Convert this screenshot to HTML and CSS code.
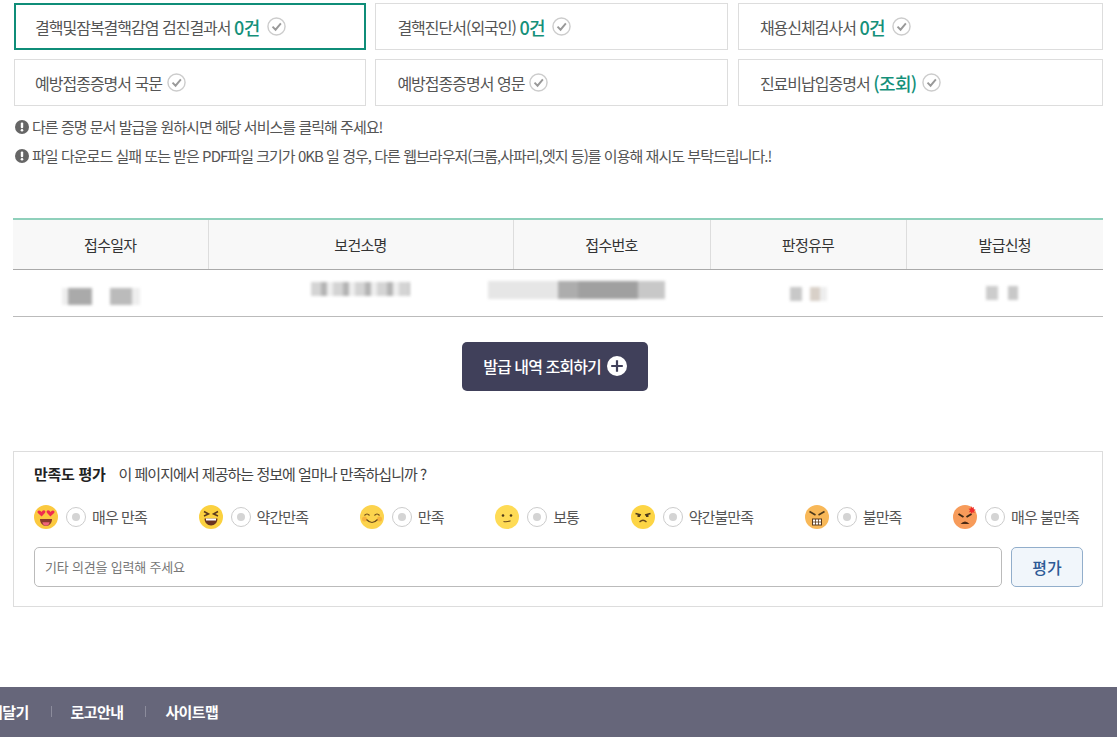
FILE: index.html
```html
<!DOCTYPE html>
<html lang="ko">
<head>
    <meta charset="UTF-8">
    <title>증명서 발급</title>
    <link rel="stylesheet" href="styles.css">
</head>
<body>
    <svg class="sprite" width="0" height="0" aria-hidden="true">
        <symbol id="check" viewBox="0 0 20 20">
            <circle cx="10" cy="10" r="9" fill="#fff" stroke="#ccc" stroke-width="1.500"/>
            <path d="M5.800 10.200 9 13.400 14.600 6.800" fill="none" stroke="#999" stroke-width="2"/>
        </symbol>
        <symbol id="alert" viewBox="0 0 14 14">
            <circle cx="7" cy="7" r="7" fill="#666"/>
            <rect x="5.800" y="2.600" width="2.400" height="5.600" rx="1" fill="#fff"/>
            <circle cx="7" cy="10.300" r="1.300" fill="#fff"/>
        </symbol>
    </svg>

    <div class="container">
        <div class="cert-grid">
            <a class="cert-card active">결핵및잠복결핵감염 검진결과서 <b>0건</b><svg class="check count"><use href="#check"/></svg></a>
            <a class="cert-card">결핵진단서(외국인) <b>0건</b><svg class="check count"><use href="#check"/></svg></a>
            <a class="cert-card">채용신체검사서 <b>0건</b><svg class="check count"><use href="#check"/></svg></a>
            <a class="cert-card">예방접종증명서 국문<svg class="check"><use href="#check"/></svg></a>
            <a class="cert-card">예방접종증명서 영문<svg class="check"><use href="#check"/></svg></a>
            <a class="cert-card">진료비납입증명서 <b>(조회)</b><svg class="check"><use href="#check"/></svg></a>
        </div>

        <p class="note"><svg class="alert"><use href="#alert"/></svg>다른 증명 문서 발급을 원하시면 해당 서비스를 클릭해 주세요!</p>
        <p class="note"><svg class="alert"><use href="#alert"/></svg>파일 다운로드 실패 또는 받은 PDF파일 크기가 0KB 일 경우, 다른 웹브라우저(크롬,사파리,엣지 등)를 이용해 재시도 부탁드립니다.!</p>

        <table class="result-table">
            <thead>
                <tr>
                    <th class="col-date">접수일자</th>
                    <th class="col-name">보건소명</th>
                    <th class="col-no">접수번호</th>
                    <th class="col-state">판정유무</th>
                    <th>발급신청</th>
                </tr>
            </thead>
            <tbody>
                <tr>
                    <td><span class="mosaic mosaic-date"></span></td>
                    <td><span class="mosaic mosaic-name"></span></td>
                    <td><span class="mosaic mosaic-no"></span></td>
                    <td><span class="mosaic mosaic-state"></span></td>
                    <td><span class="mosaic mosaic-apply"></span></td>
                </tr>
            </tbody>
        </table>

        <div class="more-wrap">
            <button type="button" class="more-btn">발급 내역 조회하기
                <svg class="plus" viewBox="0 0 20 20"><circle cx="10" cy="10" r="10" fill="#fff"/><path d="M10 4.200v11.600M4.200 10h11.600" stroke="#40405a" stroke-width="2.200"/></svg>
            </button>
        </div>

        <div class="survey">
            <div class="survey-title"><strong>만족도 평가</strong><span>이 페이지에서 제공하는 정보에 얼마나 만족하십니까 ?</span></div>

            <div class="survey-options">
                <label class="option">
                    <svg class="face" viewBox="0 0 24 24">
                        <circle cx="12" cy="12" r="12" fill="#fbc93f"/>
                        <path d="M6 14h12c0 4-2.600 7-6 7s-6-3-6-7z" fill="#8c3a2c"/>
                        <path d="M8.400 17.200h7.200c-.4 2.300-1.800 3.600-3.600 3.600s-3.200-1.300-3.600-3.600z" fill="#f0657a"/>
                        <path d="M7.600 11.400 3.900 8c-1.400-1.600.9-3.600 2.600-2l1 1 1-1.200c1.700-1.600 4 .6 2.400 2.200z" fill="#ee2d4f"/>
                        <path d="M16.400 11.400 20.100 8c1.400-1.600-.9-3.600-2.600-2l-1 1-1-1.200c-1.700-1.600-4 .6-2.400 2.200z" fill="#ee2d4f"/>
                    </svg>
                    <span class="radio"></span>매우 만족
                </label>
                <label class="option">
                    <svg class="face" viewBox="0 0 24 24">
                        <circle cx="12" cy="12" r="12" fill="#fbd13f"/>
                        <path d="M5.500 13.500h13c0 4-2.800 7-6.500 7s-6.500-3-6.500-7z" fill="#6b3420"/>
                        <rect x="7" y="13.500" width="10" height="2" fill="#fff"/>
                        <path d="M5 6.500 9.500 9 5 11M19 6.500 14.500 9l4.500 2" fill="none" stroke="#5b3a1c" stroke-width="1.500"/>
                    </svg>
                    <span class="radio"></span>약간만족
                </label>
                <label class="option">
                    <svg class="face" viewBox="0 0 24 24">
                        <circle cx="12" cy="12" r="12" fill="#fcd34d"/>
                        <circle cx="4.500" cy="14" r="2.500" fill="#f7b23c"/>
                        <circle cx="19.500" cy="14" r="2.500" fill="#f7b23c"/>
                        <path d="M4.500 10.500q2.500-3 5 0M14.500 10.500q2.500-3 5 0M6.500 14.500q5.500 6 11 0" fill="none" stroke="#6b4a1c" stroke-width="1.200"/>
                    </svg>
                    <span class="radio"></span>만족
                </label>
                <label class="option">
                    <svg class="face" viewBox="0 0 24 24">
                        <circle cx="12" cy="12" r="12" fill="#fedb55"/>
                        <circle cx="8" cy="10.500" r="1.300" fill="#4d3a1c"/>
                        <circle cx="16" cy="10.500" r="1.300" fill="#4d3a1c"/>
                        <path d="M8.500 16.500q3.500 .8 7-.8" fill="none" stroke="#6b4a1c" stroke-width="1.200"/>
                    </svg>
                    <span class="radio"></span>보통
                </label>
                <label class="option">
                    <svg class="face" viewBox="0 0 24 24">
                        <circle cx="12" cy="12" r="12" fill="#fdd545"/>
                        <path d="M4.500 8.500 10 10M19.500 8.500 14 10" stroke="#4d3a1c" stroke-width="1.400"/>
                        <path d="M6.500 11h2.500M15 11h2.500" stroke="#4d3a1c" stroke-width="1.800"/>
                        <path d="M8.500 17q3.500-3.500 7 0" fill="none" stroke="#6b4a1c" stroke-width="1.300"/>
                    </svg>
                    <span class="radio"></span>약간불만족
                </label>
                <label class="option">
                    <svg class="face" viewBox="0 0 24 24">
                        <circle cx="12" cy="12" r="12" fill="#f8b858"/>
                        <path d="M4.500 6.500 10.500 10M19.500 6.500 13.500 10" stroke="#4d3a1c" stroke-width="1.600"/>
                        <rect x="7.500" y="14" width="9" height="6" fill="#fff" stroke="#5b3a1c"/>
                        <path d="M7.500 17h9M10.500 14v6M13.500 14v6" stroke="#5b3a1c" stroke-width=".8"/>
                    </svg>
                    <span class="radio"></span>불만족
                </label>
                <label class="option">
                    <svg class="face" viewBox="0 0 24 24">
                        <circle cx="12" cy="12" r="12" fill="#f79b5a"/>
                        <path d="M5.500 9 10.500 12M18.500 9 13.500 12" stroke="#3d2a14" stroke-width="2"/>
                        <path d="M7.500 19q4.500-5 9 0z" fill="#4b2a14"/>
                        <path d="M18 1l1 2 2-1-.5 2.200 2.300.5-2 1.300 1 2-2.300-.8-1 2-.6-2.300-2 .3 1.200-2-1.600-1.500 2.300-.2z" fill="#ee2d2d"/>
                    </svg>
                    <span class="radio"></span>매우 불만족
                </label>
            </div>

            <div class="survey-form">
                <input type="text" class="survey-input" placeholder="기타 의견을 입력해 주세요">
                <button type="button" class="survey-btn">평가</button>
            </div>
        </div>
    </div>

    <footer class="footer">
        <ul class="footer-menu">
            <li>메달기</li>
            <li>로고안내</li>
            <li>사이트맵</li>
        </ul>
    </footer>
</body>
</html>
```

FILE: styles.css
```css
* {
    margin: 0;
    padding: 0;
    box-sizing: border-box;
}

body {
    font-family: "Noto Sans CJK KR", "Noto Sans", sans-serif;
    background: #fff;
    color: #555;
    min-height: 744px;
    overflow: hidden;
}

.sprite {
    position: absolute;
}

.container {
    padding: 3px 14px 0 13px;
}

.cert-grid {
    display: grid;
    grid-template-columns: 351.900px 353px 365px;
    grid-auto-rows: 47px;
    gap: 9px 9.500px;
    margin: 0 0 6px 1px;
}

.cert-card {
    display: flex;
    align-items: center;
    padding-left: 21px;
    border: 1px solid #ddd;
    background: #fff;
    font-size: 16px;
    letter-spacing: -1px;
    color: #555;
    white-space: pre;
}

.cert-card b {
    font-size: 18px;
    font-weight: 500;
    letter-spacing: -0.6px;
    color: #14907a;
}

.cert-card.active {
    border: 2px solid #0f8d78;
    padding-left: 19px;
}

.cert-card:first-child,
.cert-card:nth-child(4) {
    padding-left: 20px;
}

.cert-card.active:first-child {
    padding-left: 19px;
}

.check {
    width: 19px;
    height: 19px;
    margin-left: 5px;
}

.check.count {
    margin-left: 7px;
}

.note {
    display: flex;
    align-items: center;
    height: 29px;
    font-size: 15px;
    letter-spacing: -0.97px;
    color: #555;
}

.alert {
    width: 14px;
    height: 14px;
    margin: 0 3px 0 2px;
}

.result-table {
    width: 100%;
    margin-top: 48px;
    border-collapse: collapse;
    table-layout: fixed;
    border-top: 2px solid #8fd0bb;
    font-size: 15px;
}

.result-table th {
    height: 50px;
    background: #f8f8f8;
    border-left: 1px solid #ddd;
    border-bottom: 1px solid #aaa;
    font-weight: 400;
    color: #333;
    letter-spacing: -0.7px;
}

.result-table th:first-child {
    border-left: 0;
}

.col-date {
    width: 195px;
}

.col-name {
    width: 305px;
}

.col-no {
    width: 197px;
}

.col-state {
    width: 196px;
}

.result-table td {
    height: 47px;
    border-bottom: 1px solid #bbb;
    text-align: center;
}

.mosaic {
    display: block;
    margin: 0 auto;
    filter: blur(1.500px);
}

.mosaic-date {
    width: 78px;
    height: 17px;
    margin: 8px 0 0 49px;
    background: linear-gradient(90deg, #eee 0 6px, #aaa 6px 30px, #fff 30px 48px, #bbb 48px 70px, #eee 70px);
}

.mosaic-name {
    width: 99px;
    height: 14px;
    margin-top: -7px;
    background: repeating-linear-gradient(90deg, #d4d4d4 0 10px, #b4b4b4 10px 16px, #eee 16px 22px);
}

.mosaic-no {
    width: 177px;
    height: 18px;
    margin: -5px 0 0 -25px;
    background: linear-gradient(90deg, #e6e6e6 0 70px, #adadad 70px 90px, #a0a0a0 90px 150px, #c8c8c8 150px);
}

.mosaic-state {
    width: 37px;
    height: 14px;
    margin-top: 3px;
    background: linear-gradient(90deg, #c8c8c8 0 12px, #fff 12px 20px, #d8d0c8 20px 30px, #eee 30px);
}

.mosaic-apply {
    width: 37px;
    height: 14px;
    margin-top: 1px;
    background: linear-gradient(90deg, #ccc 0 12px, #fff 12px 22px, #c8c8c8 22px 32px, #fff 32px);
}

.more-wrap {
    display: flex;
    justify-content: center;
    padding: 25px 6px 0 0;
}

.more-btn {
    display: flex;
    align-items: center;
    justify-content: center;
    gap: 6px;
    width: 186px;
    height: 49px;
    background: #40405a;
    border: 0;
    border-radius: 5px;
    font-family: inherit;
    font-size: 16px;
    font-weight: 500;
    letter-spacing: -0.9px;
    color: #fff;
}

.plus {
    width: 20px;
    height: 20px;
}

.survey {
    margin-top: 60px;
    height: 156px;
    padding: 9px 19px 0 20px;
    border: 1px solid #ddd;
}

.survey-title {
    display: flex;
    align-items: center;
    gap: 13px;
    height: 26px;
    font-size: 15px;
    letter-spacing: -0.97px;
    color: #444;
}

.survey-title strong {
    font-weight: 700;
    letter-spacing: -0.3px;
    color: #222;
}

.survey-options {
    display: flex;
    justify-content: space-between;
    margin-top: 18px;
    padding-right: 4px;
}

.option {
    display: flex;
    align-items: center;
    height: 24px;
    font-size: 15px;
    letter-spacing: -0.9px;
    color: #555;
}

.face {
    width: 24px;
    height: 24px;
    margin-right: 8px;
}

.radio {
    position: relative;
    width: 20px;
    height: 20px;
    margin-right: 6px;
    border: 1px solid #ccc;
    border-radius: 50%;
    background: #fff;
}

.radio::after {
    content: "";
    position: absolute;
    top: 5px;
    left: 5px;
    width: 8px;
    height: 8px;
    border-radius: 50%;
    background: #d4d4d4;
}

.survey-form {
    display: flex;
    gap: 9px;
    margin-top: 18px;
}

.survey-input {
    width: 968px;
    height: 40px;
    padding: 0 10px;
    border: 1px solid #bbb;
    border-radius: 5px;
    font-family: inherit;
    font-size: 13px;
    letter-spacing: -0.2px;
    outline: none;
}

.survey-input::placeholder {
    color: #777;
}

.survey-btn {
    width: 72px;
    height: 40px;
    background: #f1f6fb;
    border: 1px solid #92aecb;
    border-radius: 5px;
    font-family: inherit;
    font-size: 16px;
    font-weight: 500;
    color: #2d5a96;
}

.footer {
    margin-top: 80px;
    height: 50px;
    background: #66667a;
}

.footer-menu {
    display: flex;
    align-items: center;
    height: 50px;
    margin-left: -11px;
    list-style: none;
    font-size: 15px;
    font-weight: 700;
    letter-spacing: -0.6px;
    color: #fff;
}

.footer-menu li + li {
    margin-left: 22px;
    padding-left: 20px;
    background: linear-gradient(#8c8c9c, #8c8c9c) left center / 1px 11px no-repeat;
}
```
